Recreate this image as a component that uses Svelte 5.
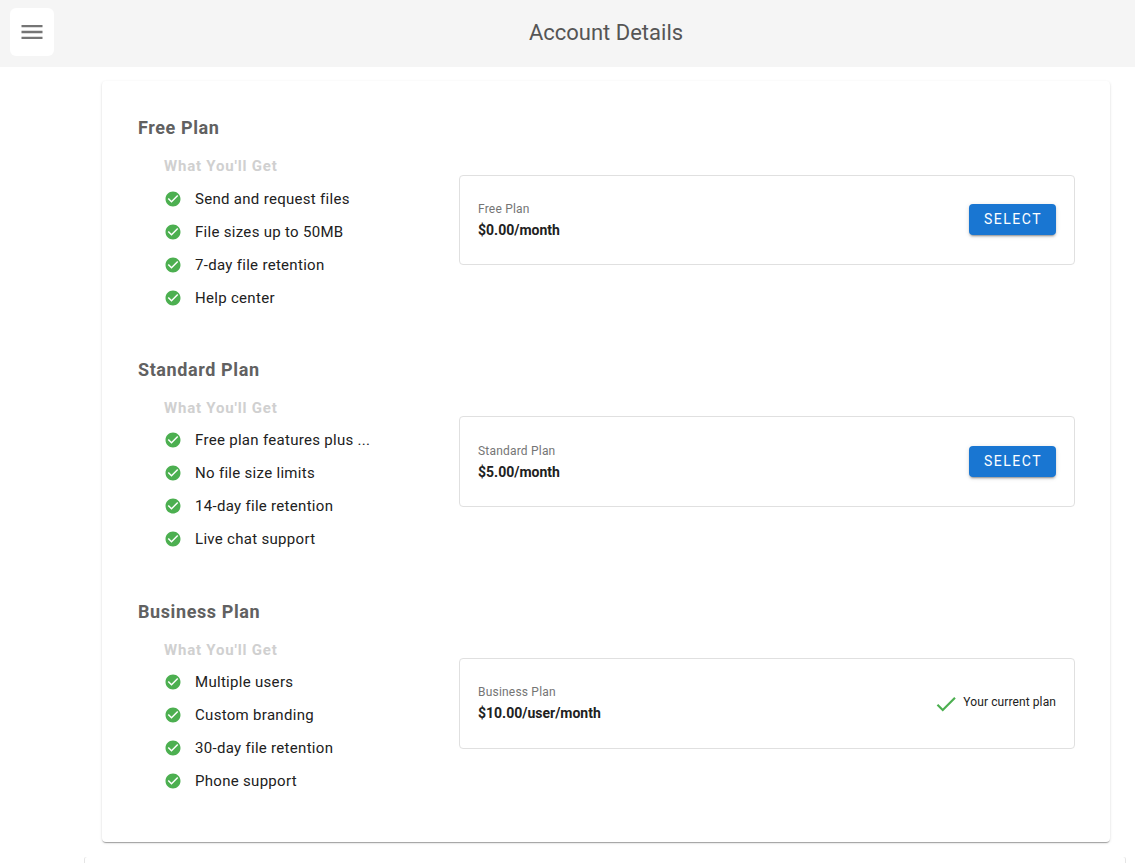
<script>
  const plans = [
    {
      name: 'Free Plan',
      price: '$0.00/month',
      features: ['Send and request files', 'File sizes up to 50MB', '7-day file retention', 'Help center']
    },
    {
      name: 'Standard Plan',
      price: '$5.00/month',
      features: ['Free plan features plus ...', 'No file size limits', '14-day file retention', 'Live chat support']
    },
    {
      name: 'Business Plan',
      price: '$10.00/user/month',
      current: true,
      features: ['Multiple users', 'Custom branding', '30-day file retention', 'Phone support']
    }
  ];
</script>

<header class="topbar">
  <button class="menu-btn" aria-label="menu">
    <svg viewBox="0 0 24 24" width="28" height="28"><path d="M3 18h18v-2H3v2zm0-5h18v-2H3v2zm0-7v2h18V6H3z" /></svg>
  </button>
  <h1>Account Details</h1>
</header>

<main class="page">
  <section class="paper">
    {#each plans as plan}
      <div class="plan">
        <h2>{plan.name}</h2>
        <div class="plan-row">
          <div class="features">
            <h3>What You'll Get</h3>
            <ul>
              {#each plan.features as feature}
                <li>
                  <svg viewBox="0 0 24 24" width="18" height="18"><path d="M12 2C6.48 2 2 6.48 2 12s4.48 10 10 10 10-4.48 10-10S17.52 2 12 2zm-2 15-5-5 1.41-1.41L10 14.17l7.59-7.59L19 8l-9 9z" /></svg>
                  <span>{feature}</span>
                </li>
              {/each}
            </ul>
          </div>
          <div class="plan-box">
            <div class="plan-info">
              <span class="plan-name">{plan.name}</span>
              <b>{plan.price}</b>
            </div>
            {#if plan.current}
              <div class="current">
                <svg viewBox="0 0 24 24" width="26" height="26"><path d="M9 16.17 4.83 12l-1.42 1.41L9 19 21 7l-1.41-1.41z" /></svg>
                <span>Your current plan</span>
              </div>
            {:else}
              <button class="select">Select</button>
            {/if}
          </div>
        </div>
      </div>
    {/each}
  </section>
  <div class="next-paper"></div>
</main>

<style>
  :global(body) {
    background: #fff;
    font-family: Roboto, "Liberation Sans", sans-serif;
    overflow: hidden;
  }
  .topbar {
    height: 67px;
    padding: 0 0 0 77px;
    background: #f5f5f5;
    display: flex;
    align-items: center;
    position: relative;
  }
  .topbar h1 {
    flex: 1;
    margin: 0;
    padding-bottom: 3px;
    text-align: center;
    font-size: 22px;
    font-weight: 400;
    color: #555;
  }
  .menu-btn {
    position: absolute;
    left: 10px;
    top: 8px;
    width: 44px;
    height: 48px;
    border: 0;
    border-radius: 6px;
    background: #fff;
    display: flex;
    align-items: center;
    justify-content: center;
    padding: 0;
  }
  .menu-btn svg { fill: #757575; }

  .page {
    padding: 14px 25px 0 102px;
  }
  .paper {
    height: 761px;
    box-sizing: border-box;
    padding: 35px 35px 0 36px;
    background: #fff;
    border-radius: 4px;
    box-shadow: 0 2px 1px -1px rgba(0,0,0,0.2), 0 1px 1px 0 rgba(0,0,0,0.14), 0 1px 3px 0 rgba(0,0,0,0.12);
  }
  .next-paper {
    height: 40px;
    margin: 15px -15px 0 -17px;
    border-radius: 2px;
    box-shadow: -1px 0 0 rgba(0,0,0,0.1), 1px 0 0 rgba(0,0,0,0.1);
  }

  .plan { height: 241.8px; }
  .plan h2 {
    margin: 0;
    font-size: 18px;
    line-height: 24px;
    font-weight: 700;
    letter-spacing: 0.6px;
    color: #616161;
  }
  .plan-row {
    display: flex;
    align-items: flex-start;
  }
  .features {
    width: 295px;
    padding: 16px 0 0 26px;
    box-sizing: border-box;
    flex-shrink: 0;
  }
  .features h3 {
    margin: 0 0 6px;
    font-size: 15px;
    line-height: 20px;
    font-weight: 700;
    letter-spacing: 0.8px;
    color: #d0d0d0;
  }
  ul { list-style: none; margin: 0; padding: 0; }
  li {
    height: 33px;
    display: flex;
    align-items: center;
    font-size: 15px;
    color: #212121;
    letter-spacing: 0.3px;
  }
  li svg { fill: #4caf50; flex-shrink: 0; margin-right: 13px; }

  .plan-box {
    flex: 1;
    height: 90.5px;
    margin: 34.6px 0 0 26px;
    padding: 0 18px;
    box-sizing: border-box;
    border: 1px solid #e0e0e0;
    border-radius: 4px;
    display: flex;
    align-items: center;
    justify-content: space-between;
  }
  .plan-info { display: flex; flex-direction: column; gap: 2px; }
  .plan-name { font-size: 12px; line-height: 18px; color: #757575; letter-spacing: 0.2px; }
  .plan-info b { font-size: 14px; line-height: 20px; font-weight: 700; color: #212121; }
  .select {
    width: 87px;
    height: 31px;
    border: 0;
    padding: 0 0 2px 1px;
    border-radius: 4px;
    background: #1976d2;
    color: #fff;
    font-family: inherit;
    font-size: 14px;
    font-weight: 400;
    letter-spacing: 1.5px;
    text-transform: uppercase;
    box-shadow: 0 3px 1px -2px rgba(0,0,0,0.2), 0 2px 2px 0 rgba(0,0,0,0.14), 0 1px 5px 0 rgba(0,0,0,0.12);
  }
  .current { display: flex; align-items: center; gap: 4px; font-size: 12px; letter-spacing: 0.1px; color: #212121; }
  .current svg { fill: #4caf50; margin-top: 2px; }
  .current span { margin-bottom: 3px; }
</style>
